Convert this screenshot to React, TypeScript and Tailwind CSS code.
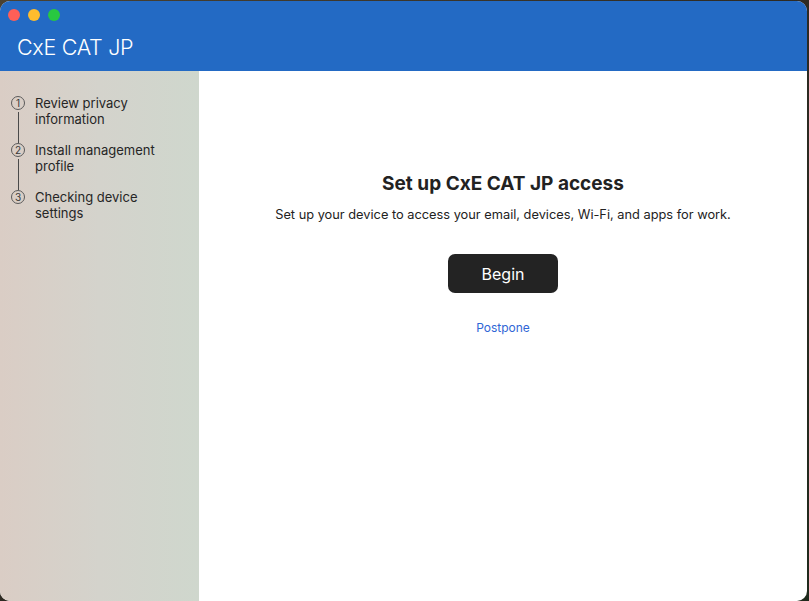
import React from 'react';

const steps = [
  { n: '1', lines: ['Review privacy', 'information'] },
  { n: '2', lines: ['Install management', 'profile'] },
  { n: '3', lines: ['Checking device', 'settings'] },
];

function StepItem({ n, lines, last }: { n: string; lines: string[]; last: boolean }) {
  return (
    <div className="flex h-[47px]">
      <div className="flex w-[14px] flex-col items-center">
        <div className="flex h-[14px] w-[14px] items-center justify-center rounded-full border border-[#5a5a5a] text-[10px] leading-none text-[#3a3a3a]">
          {n}
        </div>
        {!last && <div className="mt-[2px] w-px flex-1 bg-[#4a4a4a]" />}
      </div>
      <div className="ml-[10px] -mt-[1px] text-[13px] leading-[16px] text-[#262626]">
        {lines.map((l) => (
          <div key={l}>{l}</div>
        ))}
      </div>
    </div>
  );
}

export default function App() {
  return (
    <div
      className="h-[601px] w-[809px] overflow-hidden bg-gradient-to-br from-[#4a4232] via-[#2e2a22] to-[#1f2a1c] pt-[1px] pr-[2px]"
      style={{ fontFamily: 'Inter, "Liberation Sans", sans-serif' }}
    >
      <div className="flex h-[600px] w-[807px] flex-col overflow-hidden rounded-[10px] bg-white">
        {/* Title bar */}
        <div className="h-[70px] bg-[#236ac4] px-[8px] pt-[8px]">
          <div className="flex gap-[8px]">
            <span className="h-[12px] w-[12px] rounded-full bg-[#fe5f57]" />
            <span className="h-[12px] w-[12px] rounded-full bg-[#febc2e]" />
            <span className="h-[12px] w-[12px] rounded-full bg-[#28c840]" />
          </div>
          <div className="ml-[9px] mt-[12px] text-[21.5px] font-light leading-[28px] tracking-[-0.3px] text-white">
            CxE CAT JP
          </div>
        </div>

        <div className="flex flex-1">
          {/* Sidebar */}
          <div className="w-[199px] bg-gradient-to-r from-[#dacdc5] via-[#d4d3cc] to-[#cfd7cd] pl-[11px] pt-[25px]">
            {steps.map((s, i) => (
              <StepItem key={s.n} n={s.n} lines={s.lines} last={i === steps.length - 1} />
            ))}
          </div>

          {/* Content */}
          <div className="flex flex-1 flex-col items-center pt-[101px] text-[#222]">
            <h1 className="text-[19px] font-bold leading-[24px]">Set up CxE CAT JP access</h1>
            <p className="mt-[11px] text-[12.8px] leading-[16px]">
              Set up your device to access your email, devices, Wi-Fi, and apps for work.
            </p>
            <button className="mt-[31px] h-[39px] w-[110px] rounded-[7px] bg-[#232323] text-[16px] text-white">
              Begin
            </button>
            <a className="mt-[27px] text-[12px] leading-[15px] text-[#2f66d6]">Postpone</a>
          </div>
        </div>
      </div>
    </div>
  );
}
